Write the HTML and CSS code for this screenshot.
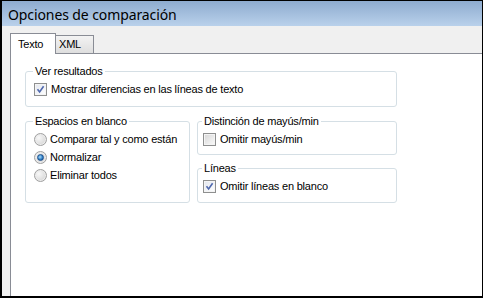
FILE: index.html
```html
<!DOCTYPE html>
<html lang="es">
<head>
    <meta charset="UTF-8">
    <title>Opciones de comparación</title>
    <link rel="stylesheet" href="styles.css">
</head>
<body>
    <div class="window">
        <div class="titlebar">Opciones de comparación</div>

        <div class="client">
            <div class="tabs">
                <div class="tab tab-active">Texto</div>
                <div class="tab">XML</div>
            </div>

            <div class="panel">
                <div class="group group-wide">
                    <div class="group-title">Ver resultados</div>
                    <label class="option">
                        <span class="check checked">
                            <svg viewBox="0 0 9 9" width="9" height="9"><path d="M1.5 4.3 L3.6 7 L7.6 1.2" fill="none" stroke="#4f68ad" stroke-width="1.6"/></svg>
                        </span>
                        Mostrar diferencias en las líneas de texto
                    </label>
                </div>

                <div class="row">
                    <div class="group group-left">
                        <div class="group-title">Espacios en blanco</div>
                        <label class="option"><span class="radio"></span>Comparar tal y como están</label>
                        <label class="option"><span class="radio selected"></span>Normalizar</label>
                        <label class="option"><span class="radio"></span>Eliminar todos</label>
                    </div>

                    <div class="column">
                        <div class="group group-small">
                            <div class="group-title">Distinción de mayús/min</div>
                            <label class="option"><span class="check"></span>Omitir mayús/min</label>
                        </div>
                        <div class="group group-small group-last">
                            <div class="group-title">Líneas</div>
                            <label class="option">
                                <span class="check checked">
                                    <svg viewBox="0 0 9 9" width="9" height="9"><path d="M1.5 4.3 L3.6 7 L7.6 1.2" fill="none" stroke="#4f68ad" stroke-width="1.6"/></svg>
                                </span>
                                Omitir líneas en blanco
                            </label>
                        </div>
                    </div>
                </div>
            </div>
        </div>
    </div>
</body>
</html>
```

FILE: styles.css
```css
html, body {
    margin: 0;
    padding: 0;
    background-color: #000;
}

body {
    width: 483px;
    height: 298px;
    overflow: hidden;
    font-family: "Liberation Sans", Arial, sans-serif;
    font-size: 11px;
    letter-spacing: -0.2px;
    color: #000;
}

.window {
    margin: 1px 1px 0 2px;
    height: 295px;
    background-color: #f0f0f0;
    display: flex;
    flex-direction: column;
    overflow: hidden;
}

.titlebar {
    height: 22px;
    padding: 3px 0 0 6px;
    line-height: 22px;
    font-family: "Noto Sans", "Open Sans", sans-serif;
    font-size: 14px;
    letter-spacing: -0.1px;
    background: linear-gradient(to bottom, #8eabcf, #b9d1eb);
}

.client {
    flex: 1;
    display: flex;
    flex-direction: column;
    padding: 7px 0 0 8px;
}

.tabs {
    display: flex;
    align-items: flex-end;
}

.tab {
    box-sizing: border-box;
    width: 39px;
    height: 18px;
    margin-left: -1px;
    padding: 2px 0 0 3px;
    line-height: 13px;
    border: 1px solid #898c95;
    border-bottom: none;
    background: linear-gradient(to bottom, #f3f3f3, #dedede);
}

.tab-active {
    position: relative;
    z-index: 1;
    width: 46px;
    height: 21px;
    margin-left: 0;
    margin-bottom: -1px;
    padding: 4px 0 0 7px;
    background: #fff;
}

.panel {
    flex: 1;
    background-color: #fff;
    border-top: 1px solid #898c95;
    border-left: 1px solid #898c95;
    padding: 17px 0 0 14px;
}

.group {
    box-sizing: border-box;
    border: 1px solid #d5dfe5;
    border-radius: 3px;
    padding: 0 6px 9px 8px;
}

.group-wide {
    width: 372px;
    padding-bottom: 10px;
}

.group-title {
    display: table;
    margin: -7px 0 0 -1px;
    padding: 0 2px;
    line-height: 13px;
    background-color: #fff;
}

.row {
    display: flex;
    gap: 7px;
    margin-top: 14px;
}

.group-left {
    width: 165px;
}

.column {
    width: 200px;
    display: flex;
    flex-direction: column;
    gap: 13px;
}

.group-small {
    padding-left: 5px;
    padding-bottom: 8px;
}

.group-last {
    padding-bottom: 9px;
}

.option {
    display: flex;
    align-items: center;
    height: 13px;
    line-height: 13px;
    margin-top: 5px;
    white-space: nowrap;
}

.check {
    box-sizing: border-box;
    width: 13px;
    height: 13px;
    margin-right: 4px;
    border: 1px solid #8e8f8f;
    background: linear-gradient(135deg, #d6d6d6, #fbfbfb);
    box-shadow: inset 0 0 0 1px #f4f4f4;
    display: flex;
    align-items: center;
    justify-content: center;
}

.check.checked {
    background: linear-gradient(135deg, #e2e6ee, #ffffff);
}

.radio {
    box-sizing: border-box;
    width: 13px;
    height: 13px;
    margin-right: 3px;
    border-radius: 50%;
    border: 1px solid #a0a0a0;
    background: radial-gradient(circle at 35% 35%, #f8f8f8, #dadada 70%, #c4c4c4);
    box-shadow: inset 0 0 0 1px #ececec;
    position: relative;
}

.radio.selected::after {
    content: "";
    position: absolute;
    left: 2px;
    top: 2px;
    width: 7px;
    height: 7px;
    box-sizing: border-box;
    border-radius: 50%;
    border: 1px solid #1e4f8a;
    background: radial-gradient(circle at 40% 40%, #a9dcf8, #2c7bc4 60%, #134d8c);
}
```
